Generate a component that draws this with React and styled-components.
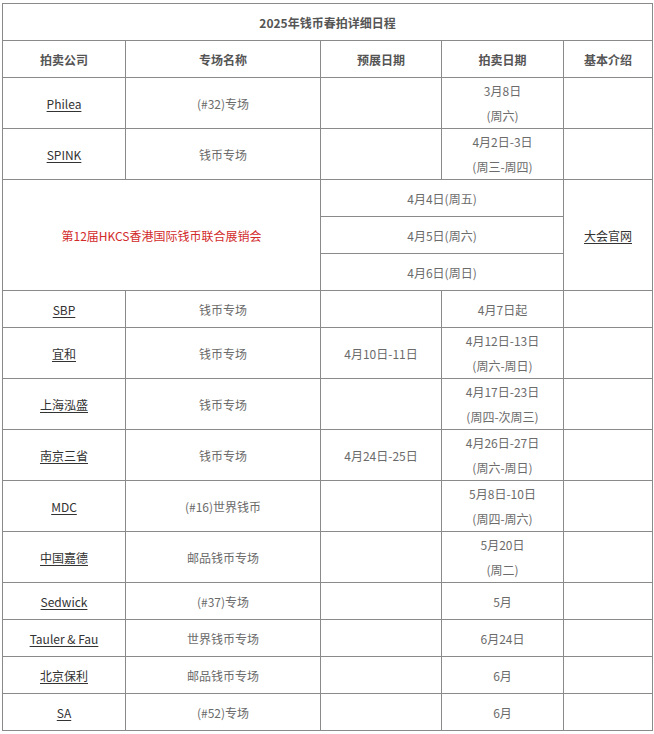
import React from "react";
import styled, { createGlobalStyle } from "styled-components";

const Global = createGlobalStyle`
  html, body { margin: 0; padding: 0; background: #fff; }
  body { font-family: "Noto Sans CJK SC", "Microsoft YaHei", "Noto Sans", sans-serif; }
`;

const Page = styled.div`
  padding: 3px 0 0 2px;
`;

const Table = styled.table`
  width: 650px;
  table-layout: fixed;
  border-collapse: collapse;
  font-size: 12px;
  color: #6b6b6b;
`;

const Row = styled.tr`
  height: ${(p) => p.$h}px;
`;

const Cell = styled.td`
  border: 1px solid #8a8a8a;
  padding: 0 4px;
  text-align: center;
  vertical-align: middle;
  line-height: 25px;
  color: ${(p) => (p.$red ? "#d22b2b" : "#6b6b6b")};
`;

const Head = styled.th`
  border: 1px solid #8a8a8a;
  padding: 0 4px;
  text-align: center;
  vertical-align: middle;
  font-weight: bold;
  color: #555;
  line-height: 25px;
`;

const Link = styled.a`
  color: #333;
  text-decoration: underline;
  text-underline-offset: 2px;
`;

const rowsBefore = [
  { co: "Philea", name: "(#32)专场", pre: "", date: ["3月8日", "(周六)"] },
  { co: "SPINK", name: "钱币专场", pre: "", date: ["4月2日-3日", "(周三-周四)"] },
];

const rowsAfter = [
  { co: "SBP", name: "钱币专场", pre: "", date: ["4月7日起"] },
  { co: "宜和", name: "钱币专场", pre: "4月10日-11日", date: ["4月12日-13日", "(周六-周日)"] },
  { co: "上海泓盛", name: "钱币专场", pre: "", date: ["4月17日-23日", "(周四-次周三)"] },
  { co: "南京三省", name: "钱币专场", pre: "4月24日-25日", date: ["4月26日-27日", "(周六-周日)"] },
  { co: "MDC", name: "(#16)世界钱币", pre: "", date: ["5月8日-10日", "(周四-周六)"] },
  { co: "中国嘉德", name: "邮品钱币专场", pre: "", date: ["5月20日", "(周二)"] },
  { co: "Sedwick", name: "(#37)专场", pre: "", date: ["5月"] },
  { co: "Tauler & Fau", name: "世界钱币专场", pre: "", date: ["6月24日"] },
  { co: "北京保利", name: "邮品钱币专场", pre: "", date: ["6月"] },
  { co: "SA", name: "(#52)专场", pre: "", date: ["6月"] },
];

function AuctionRow({ r }) {
  const h = r.date.length > 1 ? 51 : 37;
  return (
    <Row $h={h}>
      <Cell>
        <Link href="#">{r.co}</Link>
      </Cell>
      <Cell>{r.name}</Cell>
      <Cell>{r.pre}</Cell>
      <Cell>
        {r.date.map((d, i) => (
          <React.Fragment key={i}>
            {i > 0 && <br />}
            {d}
          </React.Fragment>
        ))}
      </Cell>
      <Cell />
    </Row>
  );
}

export default function App() {
  return (
    <Page>
      <Global />
      <Table>
        <colgroup>
          <col style={{ width: 123 }} />
          <col style={{ width: 195 }} />
          <col style={{ width: 121 }} />
          <col style={{ width: 122 }} />
          <col style={{ width: 89 }} />
        </colgroup>
        <thead>
          <Row $h={37}>
            <Head colSpan={5}>2025年钱币春拍详细日程</Head>
          </Row>
          <Row $h={37}>
            <Head>拍卖公司</Head>
            <Head>专场名称</Head>
            <Head>预展日期</Head>
            <Head>拍卖日期</Head>
            <Head>基本介绍</Head>
          </Row>
        </thead>
        <tbody>
          {rowsBefore.map((r) => (
            <AuctionRow key={r.co} r={r} />
          ))}
          <Row $h={37}>
            <Cell colSpan={2} rowSpan={3} $red>
              第12届HKCS香港国际钱币联合展销会
            </Cell>
            <Cell colSpan={2}>4月4日(周五)</Cell>
            <Cell rowSpan={3}>
              <Link href="#">大会官网</Link>
            </Cell>
          </Row>
          <Row $h={37}>
            <Cell colSpan={2}>4月5日(周六)</Cell>
          </Row>
          <Row $h={37}>
            <Cell colSpan={2}>4月6日(周日)</Cell>
          </Row>
          {rowsAfter.map((r) => (
            <AuctionRow key={r.co} r={r} />
          ))}
        </tbody>
      </Table>
    </Page>
  );
}
